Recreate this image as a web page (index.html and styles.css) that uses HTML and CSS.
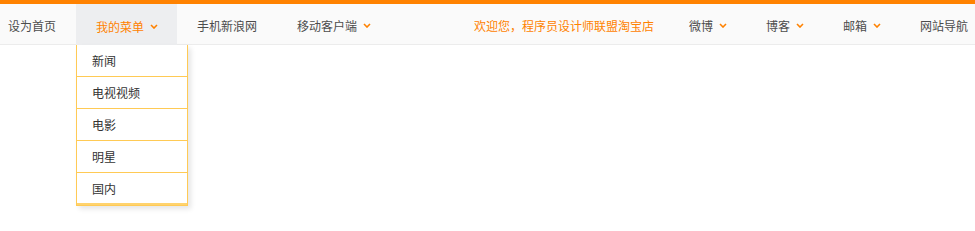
FILE: index.html
```html
<!DOCTYPE html>
<html lang="zh-CN">
<head>
<meta charset="utf-8">
<title>新浪导航</title>
<link rel="stylesheet" href="styles.css">
</head>
<body>
<div class="page">
<div class="topbar">
  <div class="nav">
    <div class="group left">
      <div class="item first"><a href="#">设为首页</a></div>
      <div class="item drop active">
        <a href="#" class="hl">我的菜单<svg class="arrow" viewBox="0 0 8 5" width="8" height="5"><polyline points="1,1 4,4 7,1"/></svg></a>
        <div class="dropdown">
          <a href="#" class="dd-item">新闻</a>
          <a href="#" class="dd-item">电视视频</a>
          <a href="#" class="dd-item">电影</a>
          <a href="#" class="dd-item">明星</a>
          <a href="#" class="dd-item">国内</a>
        </div>
      </div>
      <div class="item"><a href="#">手机新浪网</a></div>
      <div class="item drop"><a href="#">移动客户端<svg class="arrow" viewBox="0 0 8 5" width="8" height="5"><polyline points="1,1 4,4 7,1"/></svg></a></div>
    </div>
    <div class="group right">
      <div class="item welcome"><a href="#" class="hl">欢迎您，程序员设计师联盟淘宝店</a></div>
      <div class="item drop"><a href="#">微博<svg class="arrow" viewBox="0 0 8 5" width="8" height="5"><polyline points="1,1 4,4 7,1"/></svg></a></div>
      <div class="item drop"><a href="#">博客<svg class="arrow" viewBox="0 0 8 5" width="8" height="5"><polyline points="1,1 4,4 7,1"/></svg></a></div>
      <div class="item drop"><a href="#">邮箱<svg class="arrow" viewBox="0 0 8 5" width="8" height="5"><polyline points="1,1 4,4 7,1"/></svg></a></div>
      <div class="item last"><a href="#">网站导航</a></div>
    </div>
  </div>
</div>
</div>
</body>
</html>
```
FILE: styles.css
```css
* { box-sizing: border-box; }
html, body { margin: 0; padding: 0; background: #fff; }
body {
  font-family: "Noto Sans CJK SC", "Microsoft YaHei", sans-serif;
  font-size: 12px;
  color: #4c4c4c;
  min-height: 231px;
}
.page { min-height: 231px; }
a { text-decoration: none; color: inherit; }

.topbar {
  position: relative;
  border-top: 4px solid #ff8200;
  background: #fafafa;
  border-bottom: 1px solid #ececec;
  height: 45px;
  z-index: 5;
}
.nav {
  display: flex;
  justify-content: space-between;
  height: 40px;
}
.group { display: flex; height: 40px; }
.item { position: relative; height: 40px; }
.item > a {
  display: flex;
  align-items: center;
  height: 40px;
  padding: 3px 20px 0;
  white-space: nowrap;
}
.item.drop > a { padding-right: 19px; }
.item.first > a { padding-left: 8px; }
.item.last > a { padding-right: 7px; }
.item.welcome > a { padding-right: 15px; }
.item.active > a { background: #edeef0; height: 41px; }
.hl { color: #ff8200; }

.arrow {
  display: block;
  margin-left: 6px;
  fill: none;
  stroke: #ff8200;
  stroke-width: 1.6;
}

.dropdown {
  position: absolute;
  top: 41px;
  left: 0;
  width: 112px;
  display: flex;
  flex-direction: column;
  background: #ffffff;
  border: 1px solid #ffca55;
  border-top: 0;
  box-shadow: 3px 3px 5px rgba(0, 0, 0, 0.1);
  z-index: 10;
}
.dd-item {
  display: block;
  height: 32px;
  line-height: 31px;
  padding-left: 15px;
  color: #333;
  border-bottom: 1px solid #ffca55;
}
.dd-item:last-child { border-bottom-width: 2px; border-bottom-color: #ffd36e; }
```
